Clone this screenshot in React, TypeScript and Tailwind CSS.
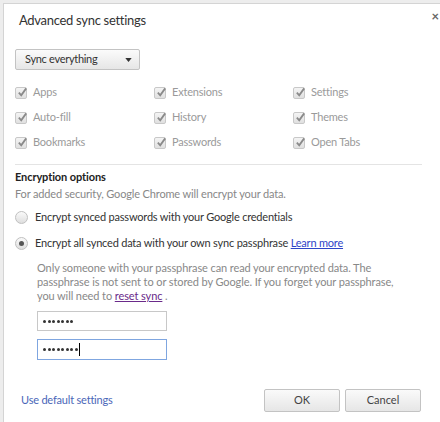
import React from 'react';

const font = { fontFamily: 'Lato, "Open Sans", sans-serif' };

const syncItems = [
  ['Apps', 'Extensions', 'Settings'],
  ['Auto-fill', 'History', 'Themes'],
  ['Bookmarks', 'Passwords', 'Open Tabs'],
];

const Check: React.FC<{ label: string }> = ({ label }) => (
  <div className="flex items-center gap-[6px]">
    <span className="relative w-[12px] h-[12px] rounded-[2px] border border-[#c8c8c8] bg-gradient-to-b from-[#f4f4f4] to-[#e0e0e0]">
      <svg viewBox="0 0 12 12" className="absolute -top-[1px] left-[1px] w-[11px] h-[11px]">
        <path d="M2 6.2 L4.6 9 L10 1.5" fill="none" stroke="#8a8a8a" strokeWidth="2" />
      </svg>
    </span>
    <span className="text-[11px] tracking-[-0.2px] text-[#9a9a9a]">{label}</span>
  </div>
);

const Radio: React.FC<{ checked?: boolean; children: React.ReactNode }> = ({ checked, children }) => (
  <div className="h-[20px] flex items-center gap-[7px]">
    <span className="flex items-center justify-center w-[13px] h-[13px] rounded-full border border-[#c0c0c0] bg-gradient-to-b from-[#fafafa] to-[#dedede]">
      {checked && <span className="w-[5px] h-[5px] rounded-full bg-[#555]" />}
    </span>
    <span className="text-[11px] tracking-[-0.2px] text-[#333]">{children}</span>
  </div>
);

const Dots: React.FC<{ n: number }> = ({ n }) => (
  <div className="flex gap-[1.5px]">
    {Array.from({ length: n }).map((_, i) => (
      <span key={i} className="w-[3px] h-[3px] rounded-full bg-[#333]" />
    ))}
  </div>
);

const btn = 'w-[76px] h-[23px] border border-[#c3c3c3] rounded-[2px] bg-gradient-to-b from-[#fafafa] to-[#e6e6e6] text-[11px] text-[#444]';

export default function App() {
  return (
    <div className="w-[440px] h-[422px] bg-[#ededed] overflow-hidden relative" style={font}>
      <div className="absolute left-[3px] top-[3px] w-[460px] h-[430px] bg-white border-l border-t border-[#d4d4d4]">
        <div className="h-[34px] flex items-center justify-between pl-[15px] pr-[24px]">
          <h1 className="text-[13px] tracking-[-0.3px] text-[#333]">Advanced sync settings</h1>
          <span className="text-[13px] font-bold text-[#666] leading-none -mt-[10px]">×</span>
        </div>

        <div className="pl-[11px] mt-[11px]">
          <div className="w-[125px] h-[21px] flex items-center justify-between pl-[9px] pr-[7px] border border-[#c3c3c3] rounded-[2px] bg-gradient-to-b from-[#fbfbfb] to-[#e6e6e6]">
            <span className="text-[11px] tracking-[-0.3px] text-[#333]">Sync everything</span>
            <svg viewBox="0 0 8 5" className="w-[7px] h-[4px]"><path d="M0 0 H8 L4 5 Z" fill="#333" /></svg>
          </div>
        </div>

        <div className="pl-[11px] mt-[10px] flex flex-col">
          {syncItems.map((row) => (
            <div key={row[0]} className="h-[25px] grid grid-cols-[139px_139px_139px] items-center">
              {row.map((l) => <Check key={l} label={l} />)}
            </div>
          ))}
        </div>

        <div className="ml-[11px] w-[407px] border-t border-[#e4e4e4] mt-[9px]" />

        <div className="pl-[11px] pt-[4px]">
          <h2 className="h-[16px] leading-[16px] text-[11px] tracking-[-0.1px] font-bold text-[#222]">Encryption options</h2>
          <p className="h-[16px] leading-[16px] text-[11px] tracking-[-0.15px] text-[#888] mt-[1px]">For added security, Google Chrome will encrypt your data.</p>
          <div className="mt-[5px] flex flex-col gap-[6px]">
            <Radio>Encrypt synced passwords with your Google credentials</Radio>
            <Radio checked>
              Encrypt all synced data with your own sync passphrase{' '}
              <a className="text-[#2f44c8] underline">Learn more</a>
            </Radio>
          </div>
          <div className="pl-[22px] mt-[8px]">
            <p className="text-[11px] tracking-[-0.1px] leading-[14px] text-[#888]">
              Only someone with your passphrase can read your encrypted data. The
              <br />
              passphrase is not sent to or stored by Google. If you forget your passphrase,
              <br />
              you will need to <a className="text-[#6a2a8a] underline">reset sync</a> .
            </p>
            <div className="mt-[8px] flex flex-col gap-[8px]">
              <div className="w-[130px] h-[20px] border border-[#c8c8c8] flex items-center px-[5px]">
                <Dots n={7} />
              </div>
              <div className="w-[130px] h-[21px] border border-[#7fa6e0] flex items-center px-[5px]">
                <Dots n={8} />
                <span className="w-px h-[13px] bg-black ml-[1px]" />
              </div>
            </div>
          </div>
        </div>

        <div className="flex items-center justify-between pl-[17px] pr-[42px] mt-[29px]">
          <a className="text-[11px] tracking-[-0.2px] text-[#4a66b8]">Use default settings</a>
          <div className="flex gap-[5px]">
            <button className={btn}>OK</button>
            <button className={btn}>Cancel</button>
          </div>
        </div>
      </div>
    </div>
  );
}
